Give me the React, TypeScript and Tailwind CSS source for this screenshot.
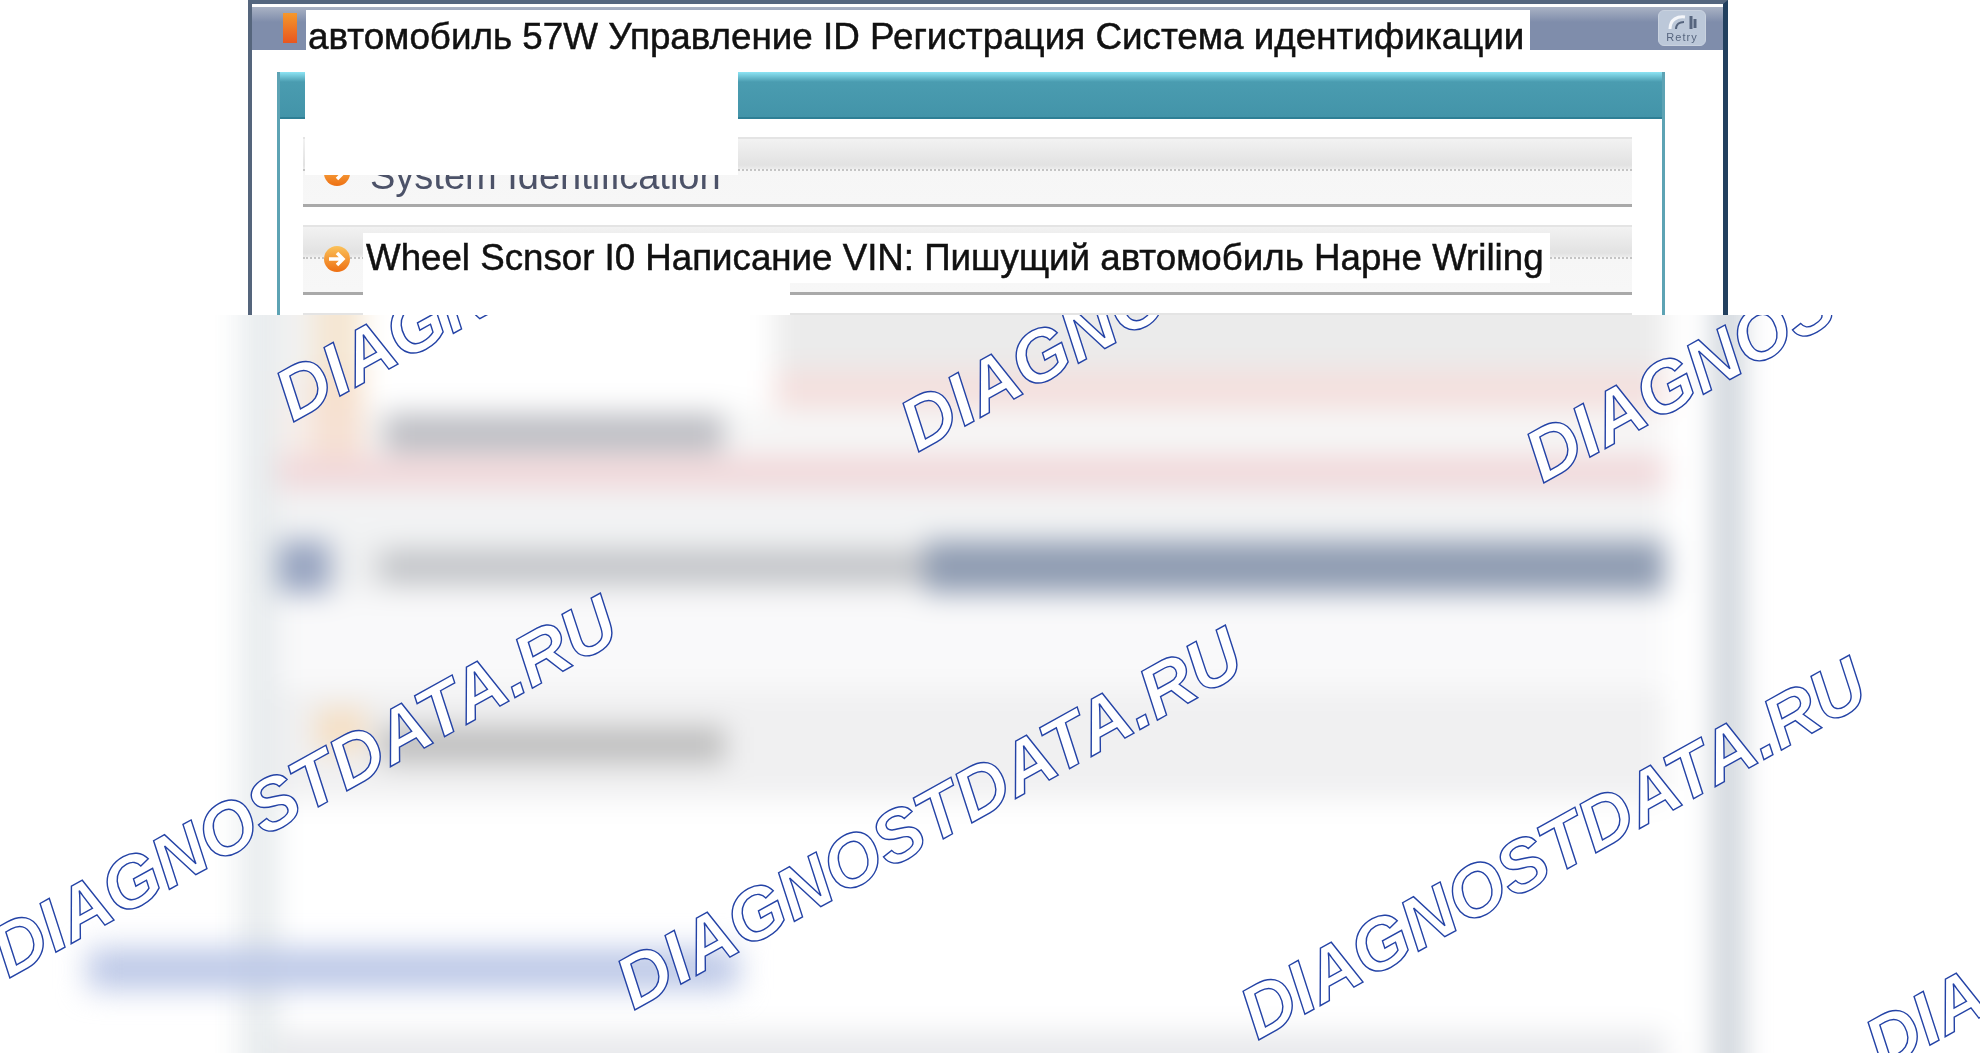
const rowBg =
  "bg-[linear-gradient(to_bottom,#f2f2f2_0%,#e2e2e2_40%,#ececec_46%,#f6f6f6_47%,#f7f7f7_100%)]";

const marks = [
  "left-[298px] top-[44px]",
  "left-[923px] top-[74px]",
  "left-[1548px] top-[105px]",
  "left-[14px] top-[600px]",
  "left-[639px] top-[632px]",
  "left-[1263px] top-[662px]",
  "left-[1888px] top-[693px]",
];

function ArrowIcon() {
  return (
    <svg width="28" height="28" viewBox="0 0 28 28" className="shrink-0">
      <defs>
        <linearGradient id="arrowFill" x1="0" y1="0" x2="0" y2="1">
          <stop offset="0" stopColor="#fbc25a" />
          <stop offset="1" stopColor="#ee6f12" />
        </linearGradient>
      </defs>
      <circle cx="14" cy="14" r="13" fill="url(#arrowFill)" />
      <path d="M6 14h13M14 8l6 6-6 6" fill="none" stroke="#fff" strokeWidth="3.5" />
    </svg>
  );
}

function RetryButton() {
  return (
    <div className="flex h-[36px] w-[48px] flex-col items-center justify-between rounded-md border border-[#c9d2df] bg-[#bcc8d9] py-[2px] blur-[0.5px]">
      <svg width="34" height="18" viewBox="0 0 34 18">
        <path d="M5 16C5 6 13 3 20 4" fill="none" stroke="#f4f6fa" strokeWidth="3" />
        <path d="M11 16c0-5 4-7 8-7" fill="none" stroke="#56657e" strokeWidth="2" />
        <path d="M26 3v13M30 6v9" fill="none" stroke="#56657e" strokeWidth="3" />
      </svg>
      <span className="text-[11px] leading-[11px] tracking-[1px] text-[#56657e]">Retry</span>
    </div>
  );
}

function Row({ className, children }: { className?: string; children?: React.ReactNode }) {
  return (
    <div
      className={`relative ml-[23px] w-[1329px] border-t-2 border-b-[3px] border-t-[#e4e4e4] border-b-[#a9a9a9] ${rowBg} ${className ?? ""}`}
    >
      <div className="absolute top-[30px] right-0 left-0 border-t-2 border-dotted border-[#c4c4c4]" />
      {children}
    </div>
  );
}

function BlurredWindow() {
  return (
    <div className="-mt-[40px] flex h-[calc(100%+80px)] w-[1980px] pl-[240px] blur-[14px]">
      {/* left edge */}
      <div className="w-[38px] shrink-0 bg-[#e8ecee]" />

      {/* panel */}
      <div className="flex w-[1387px] flex-col">
        <div className="flex h-[96px]">
          <div className="w-[35px] bg-[#f2f2f2]" />
          <div className="w-[50px] bg-[#f5e6d2]" />
          <div className="w-[412px] bg-white" />
          <div className="flex-1 bg-[#ebebeb]" />
        </div>
        <div className="flex h-[38px]">
          <div className="w-[35px] bg-[#f4f0ee]" />
          <div className="w-[50px] bg-[#f6e0cc]" />
          <div className="w-[412px] bg-white" />
          <div className="flex-1 bg-[#f4dfdd]" />
        </div>
        <div className="flex h-[47px]">
          <div className="w-[35px] bg-[#f6eeea]" />
          <div className="w-[50px] bg-[#f6e0d2]" />
          <div className="flex flex-1 items-center bg-[#f6f6f6] pl-[22px]">
            <div className="h-[38px] w-[338px] bg-[#bcbdc3]" />
          </div>
        </div>
        <div className="h-[33px] bg-[#f1d8da]" />
        <div className="h-[52px] bg-[#f2f3f4]" />
        <div className="flex h-[52px]">
          <div className="w-[52px] bg-[#97a4c0]" />
          <div className="flex w-[595px] items-center bg-[#eeeff0] pl-[50px]">
            <div className="h-[34px] w-[545px] bg-[#c2c4c8]" />
          </div>
          <div className="flex-1 bg-[#8f9cb2]" />
        </div>
        <div className="h-[97px] bg-[#f9f9fa]" />
        <div className="flex h-[110px] items-center bg-[#f0f0f1] pl-[38px]">
          <div className="mb-[30px] h-[44px] w-[50px] bg-[#f5dfc4]" />
          <div className="ml-[14px] h-[36px] w-[345px] bg-[#bebebe]" />
        </div>
        <div className="h-[232px] bg-white" />
        <div className="flex-1 bg-[#e9eaed]" />
      </div>

      {/* gap and right edge */}
      <div className="flex w-[48px] shrink-0 flex-col bg-white" />
      <div className="w-[30px] shrink-0 bg-[#ccd2d9]" />
    </div>
  );
}

export default function App() {
  return (
    <div className="flex h-screen w-full flex-col overflow-hidden bg-white font-['Liberation_Sans',sans-serif]">
      {/* sharp top part of the dialog */}
      <div className="relative z-10 h-[315px] shrink-0 overflow-hidden bg-white">
        <div className="ml-[248px] h-[330px] w-[1480px] border-t-[4px] border-r-[5px] border-l-[4px] border-t-[#55677f] border-r-[#22405f] border-l-[#55657c] bg-white pt-[3px]">
          {/* title bar */}
          <div className="flex h-[43px] bg-[linear-gradient(to_bottom,#a9b2c4,#7f8dab_35%,#7f8dab)]">
            <div className="flex w-[54px] shrink-0 pl-[31px]">
              <div className="mt-[6px] h-[30px] w-[14px] bg-[linear-gradient(to_bottom,#f5982c,#e8561f)]" />
            </div>
            <div className="mt-[3px] h-[53px] w-[1224px] shrink-0 bg-white pt-[4px] pl-[2px] text-[36.8px] leading-[46px] whitespace-nowrap text-[#111] blur-[0.6px] [-webkit-text-stroke:0.5px_#111]">
              автомобиль 57W Управление ID Регистрация Система идентификации
            </div>
            <div className="flex flex-1 justify-end pt-[3px] pr-[17px]">
              <RetryButton />
            </div>
          </div>

          {/* teal panel */}
          <div className="mt-[22px] ml-[25px] h-[260px] w-[1388px] border-x-[3px] border-[#5da3b4] bg-white">
            <div className="h-[47px] border-b-2 border-[#2f7f95] bg-[linear-gradient(to_bottom,#8ce4f4,#4a9cb0_22%,#4394a9)]" />
            <div className="h-[18px]" />
            <Row className="h-[70px]">
              <div className="absolute top-[20px] left-[20px]">
                <ArrowIcon />
              </div>
              <div className="absolute top-[14px] left-[67px] text-[38px] leading-[46px] whitespace-nowrap text-[#4c5268] blur-[0.6px]">
                System Identification
              </div>
            </Row>
            <div className="h-[18px]" />
            <Row className="h-[70px]">
              <div className="absolute top-[18px] left-[20px]">
                <ArrowIcon />
              </div>
            </Row>
            <div className="h-[18px]" />
            <Row className="h-[70px]" />
          </div>

          {/* labels pasted over the rows */}
          <div className="absolute top-[62px] left-[305px] h-[113px] w-[433px] bg-white" />
          <div className="absolute top-[233px] left-[363px] h-[50px] w-[1187px] bg-white pl-[3px] text-[36.7px] leading-[50px] whitespace-nowrap text-[#111] blur-[0.6px] [-webkit-text-stroke:0.5px_#111]">
            Wheel Scnsor I0 Написание VIN: Пишущий автомобиль Нарне Wriling
          </div>
          <div className="absolute top-[283px] left-[363px] h-[40px] w-[427px] bg-white" />
        </div>
      </div>

      {/* blurred lower part with the watermark */}
      <div className="relative min-h-0 flex-1 overflow-hidden bg-white">
        <BlurredWindow />
        <div className="absolute top-[634px] left-[88px] h-[40px] w-[650px] bg-[#bac6e6] blur-[15px]" />
        {marks.map((pos) => (
          <span
            key={pos}
            className={`absolute ${pos} origin-bottom-left -rotate-[29deg] text-[73px] leading-none font-bold whitespace-nowrap text-white italic [-webkit-text-stroke:1.4px_#2443a6]`}
          >
            DIAGNOSTDATA.RU
          </span>
        ))}
      </div>
    </div>
  );
}
